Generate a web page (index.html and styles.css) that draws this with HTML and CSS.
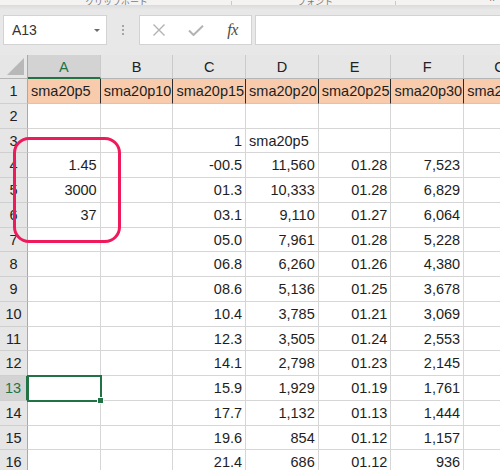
FILE: index.html
```html
<!DOCTYPE html>
<html lang="ja">
<head>
<meta charset="utf-8">
<title>Sheet</title>
<link rel="stylesheet" href="styles.css">
</head>
<body>
<div class="app">
  <div class="ribbon-edge">
    <span class="rlabel l1">クリップボード</span>
    <span class="rsep s1"></span>
    <span class="rlabel l2">フォント</span>
    <span class="rsep s2"></span>
    <span class="rcaret">^</span>
  </div>
  <div class="fbar">
    <div class="namebox"><span class="nb-text">A13</span><span class="nb-arrow"></span></div>
    <div class="grip"><i></i><i></i><i></i></div>
    <div class="fbtns">
      <span class="fbtn"><svg width="14" height="12" viewBox="0 0 14 12"><path d="M1.5 0.5 L12.5 11.5 M12.5 0.5 L1.5 11.5" stroke="#b3b3b3" stroke-width="1.4" fill="none"/></svg></span>
      <span class="fbtn"><svg width="16" height="11" viewBox="0 0 16 11"><path d="M1 5.5 L5.5 10 L15 0.8" stroke="#b3b3b3" stroke-width="2" fill="none"/></svg></span>
      <span class="fbtn fx">fx</span>
    </div>
    <div class="finput"></div>
  </div>
  <div class="sheet">
    <div class="corner"><span class="tri"></span></div>
    <div class="ch sel">A</div><div class="ch">B</div><div class="ch">C</div><div class="ch">D</div><div class="ch">E</div><div class="ch">F</div><div class="ch">G</div>

    <div class="rh">1</div>
    <div class="c r1">sma20p5</div><div class="c r1">sma20p10</div><div class="c r1">sma20p15</div><div class="c r1">sma20p20</div><div class="c r1">sma20p25</div><div class="c r1">sma20p30</div><div class="c r1">sma20p35</div>

    <div class="rh">2</div>
    <div class="c"></div><div class="c"></div><div class="c"></div><div class="c"></div><div class="c"></div><div class="c"></div><div class="c"></div>

    <div class="rh">3</div>
    <div class="c"></div><div class="c"></div><div class="c n">1</div><div class="c">sma20p5</div><div class="c"></div><div class="c"></div><div class="c"></div>

    <div class="rh">4</div>
    <div class="c n">1.45</div><div class="c"></div><div class="c n">-00.5</div><div class="c n">11,560</div><div class="c n">01.28</div><div class="c n">7,523</div><div class="c"></div>

    <div class="rh">5</div>
    <div class="c n">3000</div><div class="c"></div><div class="c n">01.3</div><div class="c n">10,333</div><div class="c n">01.28</div><div class="c n">6,829</div><div class="c"></div>

    <div class="rh">6</div>
    <div class="c n">37</div><div class="c"></div><div class="c n">03.1</div><div class="c n">9,110</div><div class="c n">01.27</div><div class="c n">6,064</div><div class="c"></div>

    <div class="rh">7</div>
    <div class="c"></div><div class="c"></div><div class="c n">05.0</div><div class="c n">7,961</div><div class="c n">01.28</div><div class="c n">5,228</div><div class="c"></div>

    <div class="rh">8</div>
    <div class="c"></div><div class="c"></div><div class="c n">06.8</div><div class="c n">6,260</div><div class="c n">01.26</div><div class="c n">4,380</div><div class="c"></div>

    <div class="rh">9</div>
    <div class="c"></div><div class="c"></div><div class="c n">08.6</div><div class="c n">5,136</div><div class="c n">01.25</div><div class="c n">3,678</div><div class="c"></div>

    <div class="rh">10</div>
    <div class="c"></div><div class="c"></div><div class="c n">10.4</div><div class="c n">3,785</div><div class="c n">01.21</div><div class="c n">3,069</div><div class="c"></div>

    <div class="rh">11</div>
    <div class="c"></div><div class="c"></div><div class="c n">12.3</div><div class="c n">3,505</div><div class="c n">01.24</div><div class="c n">2,553</div><div class="c"></div>

    <div class="rh">12</div>
    <div class="c"></div><div class="c"></div><div class="c n">14.1</div><div class="c n">2,798</div><div class="c n">01.23</div><div class="c n">2,145</div><div class="c"></div>

    <div class="rh sel">13</div>
    <div class="c"></div><div class="c"></div><div class="c n">15.9</div><div class="c n">1,929</div><div class="c n">01.19</div><div class="c n">1,761</div><div class="c"></div>

    <div class="rh">14</div>
    <div class="c"></div><div class="c"></div><div class="c n">17.7</div><div class="c n">1,132</div><div class="c n">01.13</div><div class="c n">1,444</div><div class="c"></div>

    <div class="rh">15</div>
    <div class="c"></div><div class="c"></div><div class="c n">19.6</div><div class="c n">854</div><div class="c n">01.12</div><div class="c n">1,157</div><div class="c"></div>

    <div class="rh">16</div>
    <div class="c"></div><div class="c"></div><div class="c n">21.4</div><div class="c n">686</div><div class="c n">01.12</div><div class="c n">936</div><div class="c"></div>

    <div class="highlight"></div>
    <div class="selection"><span class="handle"></span></div>
  </div>
</div>
</body>
</html>
```
FILE: styles.css
```css
html, body {
  margin: 0;
  padding: 0;
  background: #ffffff;
}
body {
  width: 500px;
  height: 470px;
  overflow: hidden;
  font-family: "Liberation Sans", Arial, "Noto Sans CJK JP", sans-serif;
  color: #1e1e1e;
}
.app {
  width: 500px;
}

/* ribbon bottom strip */
.ribbon-edge {
  height: 5px;
  background: #f4f3f2;
  display: flex;
  align-items: flex-end;
  overflow: hidden;
  position: relative;
  border-bottom: 1px solid #dcdcdc;
}
.rlabel {
  font-family: "Noto Sans CJK JP", sans-serif;
  font-size: 9px;
  line-height: 9px;
  margin-bottom: -1px;
  color: #7a7a7a;
  white-space: nowrap;
}
.l1 { margin-left: 85px; }
.rsep {
  width: 1px;
  height: 4px;
  background: #c9c9c9;
}
.s1 { margin-left: 83px; }
.l2 { margin-left: 65px; }
.s2 { margin-left: 62px; }
.rcaret {
  margin-left: 94px;
  font-size: 9px;
  line-height: 7px;
  color: #555;
}

/* formula bar */
.fbar {
  height: 49px;
  background: linear-gradient(#dedede 0px, #e8e8e8 4px, #e8e8e8 100%);
  display: flex;
  align-items: flex-start;
  padding: 9px 0 0 3px;
  box-sizing: border-box;
}
.namebox {
  width: 104px;
  height: 30px;
  box-sizing: border-box;
  background: #fff;
  border: 1px solid #d3d3d3;
  display: flex;
  align-items: center;
  justify-content: space-between;
  padding: 0 6px 0 8px;
}
.nb-text {
  font-size: 14px;
  color: #333;
}
.nb-arrow {
  width: 0;
  height: 0;
  border-left: 3px solid transparent;
  border-right: 3px solid transparent;
  border-top: 3px solid #6a6a6a;
}
.grip {
  width: 32px;
  height: 30px;
  display: flex;
  flex-direction: column;
  align-items: center;
  justify-content: center;
  gap: 2px;
}
.grip i {
  display: block;
  width: 2px;
  height: 2px;
  background: #a5a5a5;
}
.fbtns {
  width: 113px;
  height: 30px;
  box-sizing: border-box;
  background: #fff;
  border: 1px solid #d3d3d3;
  display: flex;
  align-items: center;
  padding-left: 0;
}
.fbtn {
  width: 38px;
  display: flex;
  justify-content: center;
  align-items: center;
}
.fx {
  font-family: "Liberation Serif", "DejaVu Serif", serif;
  font-style: italic;
  font-size: 16px;
  color: #4a4a4a;
  letter-spacing: -0.5px;
}
.finput {
  flex: 1;
  height: 30px;
  margin-left: 3px;
  box-sizing: border-box;
  background: #fff;
  border: 1px solid #d3d3d3;
  border-right: none;
}

/* sheet grid */
.sheet {
  position: relative;
  display: grid;
  grid-template-columns: 28px repeat(7, 72.7px);
  grid-template-rows: 24px;
  grid-auto-rows: 24.75px;
  width: max-content;
  font-size: 14.5px;
}
.corner {
  background: #e6e6e6;
  border-right: 1px solid #a9a9a9;
  border-bottom: 1px solid #b5b5b5;
  position: relative;
  box-sizing: border-box;
}
.tri {
  position: absolute;
  right: 3px;
  bottom: 3px;
  width: 0;
  height: 0;
  border-left: 17px solid transparent;
  border-bottom: 17px solid #b8b8b8;
}
.ch {
  background: #e6e6e6;
  border-right: 1px solid #cacaca;
  border-bottom: 1px solid #b5b5b5;
  box-sizing: border-box;
  text-align: center;
  line-height: 24px;
  color: #222;
  font-size: 14.5px;
}
.ch.sel {
  background: #d3d3d3;
  color: #217346;
  border-bottom: 2px solid #217346;
}
.rh {
  background: #e6e6e6;
  border-right: 1px solid #a9a9a9;
  border-bottom: 1px solid #cfcfcf;
  box-sizing: border-box;
  text-align: center;
  line-height: 25px;
  color: #222;
  font-size: 14.5px;
}
.rh.sel {
  background: #d3d3d3;
  color: #217346;
  border-right: 2px solid #217346;
}
.c {
  border-right: 1px solid #d6d6d6;
  border-bottom: 1px solid #d6d6d6;
  box-sizing: border-box;
  padding: 0 3px 0 3px;
  line-height: 25px;
  white-space: nowrap;
  overflow: hidden;
  color: #1e1e1e;
}
.c.n {
  text-align: right;
}
.c.r1 {
  background: #f8cbad;
  border-right: 1px solid #2b2b2b;
  border-bottom: 1px solid #c9c9c9;
  padding-left: 3px;
  padding-right: 0;
}

/* overlays */
.highlight {
  position: absolute;
  left: 13px;
  top: 82px;
  width: 108px;
  height: 106px;
  box-sizing: border-box;
  border: 3.5px solid #ee1a5c;
  border-radius: 16px;
  pointer-events: none;
}
.selection {
  position: absolute;
  left: 27px;
  top: 320px;
  width: 75px;
  height: 27px;
  box-sizing: border-box;
  border: 2px solid #217346;
}
.handle {
  position: absolute;
  right: -4px;
  bottom: -4px;
  width: 5px;
  height: 5px;
  background: #217346;
  border: 1px solid #fff;
}
```
